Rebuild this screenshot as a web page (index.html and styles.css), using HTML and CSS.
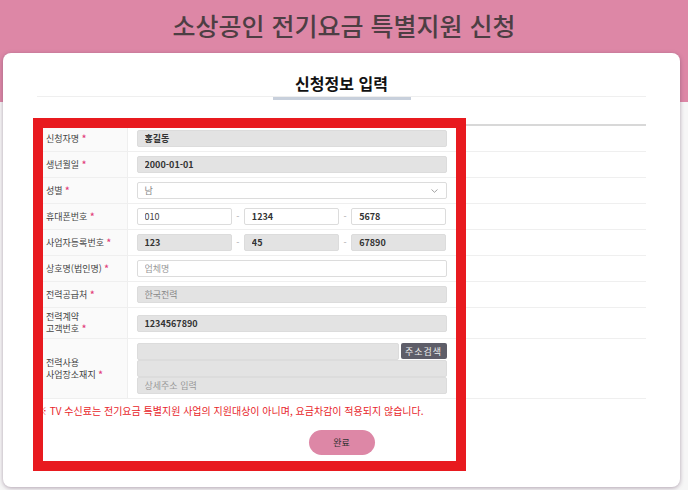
FILE: index.html
```html
<!DOCTYPE html>
<html lang="ko">
<head>
    <meta charset="UTF-8">
    <meta name="viewport" content="width=device-width, initial-scale=1.0">
    <title>소상공인 전기요금 특별지원 신청</title>
    <link rel="stylesheet" href="styles.css">
</head>
<body>
    <div class="page">
        <h1 class="page-title">소상공인 전기요금 특별지원 신청</h1>

        <div class="card">
            <div class="sec-title"><span>신청정보 입력</span></div>

            <table class="form-table">
                <tr>
                    <th>신청자명 <em>*</em></th>
                    <td><div class="field"><input class="inp ro bold" type="text" value="홍길동" readonly></div></td>
                </tr>
                <tr>
                    <th>생년월일 <em>*</em></th>
                    <td><div class="field"><input class="inp ro bold" type="text" value="2000-01-01" readonly></div></td>
                </tr>
                <tr>
                    <th>성별 <em>*</em></th>
                    <td>
                        <div class="field">
                            <div class="select">
                                <span>남</span>
                                <svg width="7" height="4" viewBox="0 0 7 4"><path d="M0.5 0.5 L3.5 3.3 L6.5 0.5" fill="none" stroke="#999" stroke-width="0.9"/></svg>
                            </div>
                        </div>
                    </td>
                </tr>
                <tr>
                    <th>휴대폰번호 <em>*</em></th>
                    <td>
                        <div class="field split">
                            <input class="inp" type="text" value="010">
                            <span class="dash">-</span>
                            <input class="inp bold" type="text" value="1234">
                            <span class="dash">-</span>
                            <input class="inp bold" type="text" value="5678">
                        </div>
                    </td>
                </tr>
                <tr>
                    <th>사업자등록번호 <em>*</em></th>
                    <td>
                        <div class="field split">
                            <input class="inp ro bold" type="text" value="123" readonly>
                            <span class="dash">-</span>
                            <input class="inp ro bold" type="text" value="45" readonly>
                            <span class="dash">-</span>
                            <input class="inp ro bold" type="text" value="67890" readonly>
                        </div>
                    </td>
                </tr>
                <tr>
                    <th>상호명(법인명) <em>*</em></th>
                    <td><div class="field"><input class="inp" type="text" placeholder="업체명"></div></td>
                </tr>
                <tr>
                    <th>전력공급처 <em>*</em></th>
                    <td><div class="field"><input class="inp ro light" type="text" value="한국전력" readonly></div></td>
                </tr>
                <tr>
                    <th>전력계약<br>고객번호 <em>*</em></th>
                    <td><div class="field"><input class="inp ro bold" type="text" value="1234567890" readonly></div></td>
                </tr>
                <tr>
                    <th>전력사용<br>사업장소재지 <em>*</em></th>
                    <td>
                        <div class="field addr">
                            <div class="addr-row">
                                <input class="inp ro" type="text" readonly>
                                <button class="addr-btn">주소검색</button>
                            </div>
                            <input class="inp ro" type="text" readonly>
                            <input class="inp ro" type="text" placeholder="상세주소 입력">
                        </div>
                    </td>
                </tr>
            </table>

            <p class="notice">※ TV 수신료는 전기요금 특별지원 사업의 지원대상이 아니며, 요금차감이 적용되지 않습니다.</p>

            <div class="btn-wrap">
                <button class="done-btn">완료</button>
            </div>

            <!-- highlight box drawn over the form -->
            <div class="mark"></div>
        </div>
    </div>
</body>
</html>
```

FILE: styles.css
```css
:root {
    --pink: #dd87a6;
    --title: #4d3e43;
    --line: #efefef;
    --gray-input: #e3e3e3;
    --red: #e81a1f;
}

* {
    margin: 0;
    padding: 0;
    box-sizing: border-box;
}

body {
    font-family: 'Noto Sans CJK KR', 'Noto Sans', sans-serif;
    background: #f6f6f6;
    color: #333;
    overflow: hidden;
}

.page {
    min-height: 490px;
    background: linear-gradient(to bottom, var(--pink) 0, var(--pink) 102px, #f6f6f6 102px);
    padding-bottom: 3px;
}

.page-title {
    height: 53px;
    padding-top: 8px;
    text-align: center;
    font-size: 25px;
    line-height: 34px;
    font-weight: 500;
    color: var(--title);
}

.card {
    position: relative;
    margin: 0 8px 0 3px;
    height: 434px;
    background: #fff;
    border-radius: 8px;
    box-shadow: 0 1px 4px rgba(90, 60, 90, 0.45);
    padding: 18px 34px 0 34px;
}

.sec-title {
    text-align: center;
    border-bottom: 1px solid var(--line);
    height: 26px;
}

.sec-title span {
    display: inline-block;
    width: 138px;
    height: 27px;
    font-size: 16px;
    line-height: 20px;
    font-weight: 700;
    color: #111;
    border-bottom: 3px solid #c8d0dc;
}

.form-table {
    width: 100%;
    margin-top: 27px;
    border-collapse: collapse;
    border-top: 2px solid #d8d8d8;
    font-size: 9px;
}

.form-table th,
.form-table td {
    border-bottom: 1px solid var(--line);
    vertical-align: middle;
}

.form-table th {
    width: 90px;
    padding: 3px 4px 3px 9px;
    background: #fafafa;
    border-right: 1px solid var(--line);
    text-align: left;
    font-weight: 400;
    line-height: 12px;
    color: #444;
}

.form-table th em {
    font-style: normal;
    font-weight: 700;
    color: #e2417c;
}

.form-table td {
    padding: 4px 9px;
}

.field {
    width: 310px;
}

.inp {
    display: block;
    width: 100%;
    height: 17px;
    padding: 0 7px;
    border: 1px solid #dcdcdc;
    border-radius: 2px;
    background: #fff;
    font-family: inherit;
    font-size: 9px;
    color: #444;
    outline: none;
}

.inp::placeholder {
    color: #999;
}

.inp.ro {
    background: var(--gray-input);
}

.inp.bold {
    font-weight: 700;
    color: #333;
}

.inp.light {
    color: #888;
}

.select {
    display: flex;
    align-items: center;
    justify-content: space-between;
    height: 17px;
    padding: 0 8px 0 7px;
    border: 1px solid #dcdcdc;
    border-radius: 2px;
    color: #888;
}

.split {
    display: flex;
    align-items: center;
}

.split .inp {
    flex: 1;
}

.dash {
    width: 12px;
    text-align: center;
    color: #aaa;
}

.addr {
    display: flex;
    flex-direction: column;
}

.addr-row {
    display: flex;
    gap: 2px;
}

.addr-row .inp {
    flex: 1;
}

.addr-btn {
    width: 46px;
    height: 16px;
    border: none;
    border-radius: 2px;
    background: #5e5e69;
    color: #eee;
    font-family: inherit;
    font-size: 9px;
    letter-spacing: 1px;
}

.notice {
    margin-top: 5px;
    font-size: 10px;
    line-height: 14px;
    color: #e8262b;
}

.btn-wrap {
    text-align: center;
    margin-top: 9px;
}

.done-btn {
    width: 66px;
    height: 25px;
    border: none;
    border-radius: 13px;
    background: var(--pink);
    font-family: inherit;
    font-size: 9px;
    color: #333;
}

.mark {
    position: absolute;
    left: 30px;
    top: 65px;
    width: 433px;
    height: 353px;
    border: 10px solid var(--red);
}
```
